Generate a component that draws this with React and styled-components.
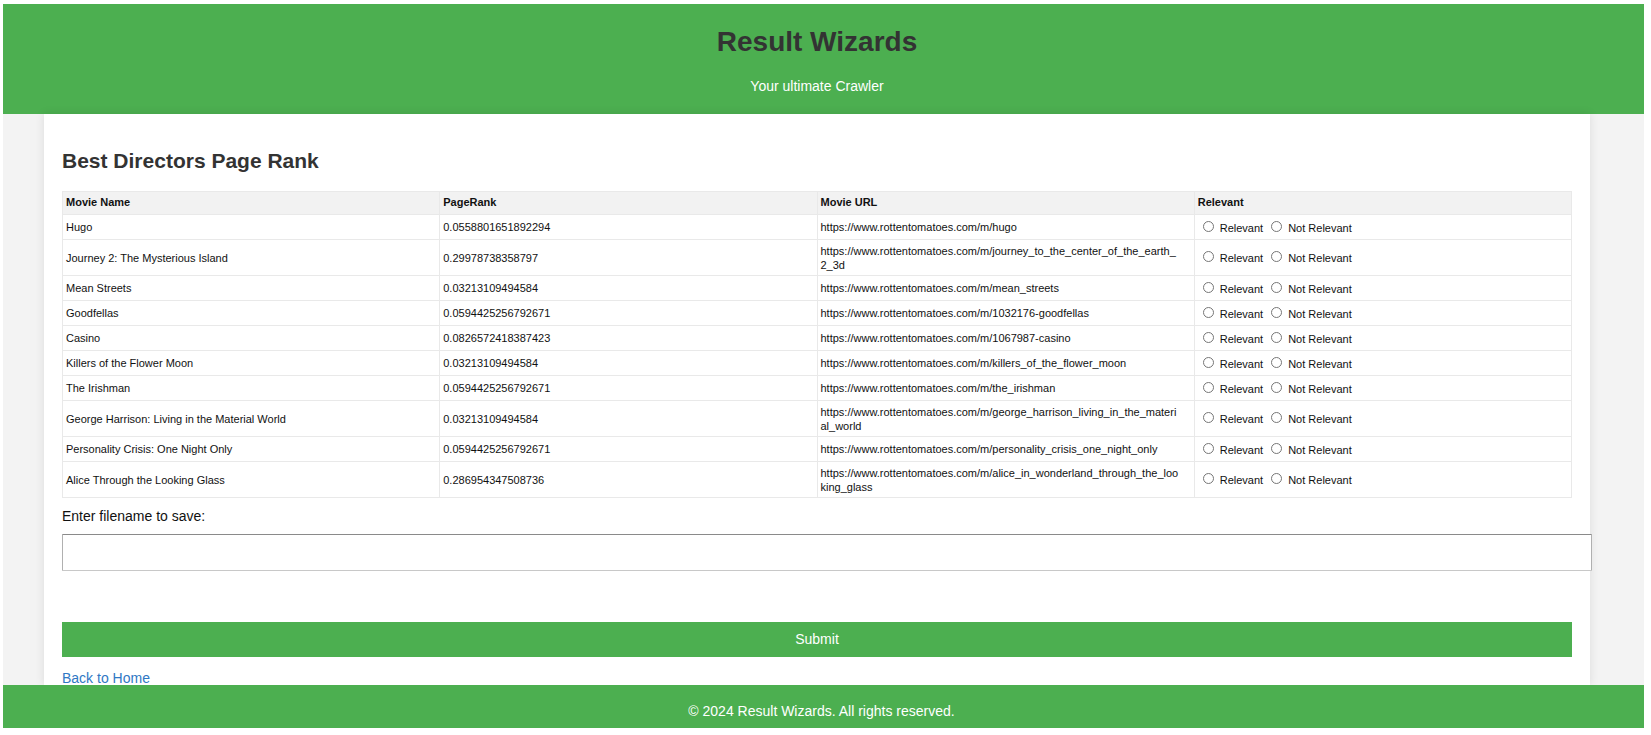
import React from "react";
import styled, { createGlobalStyle } from "styled-components";

const GlobalStyle = createGlobalStyle`
  body {
    margin: 0;
    background: #fff;
    color: #111;
    font-family: "Liberation Sans", Arial, sans-serif;
    font-size: 14px;
    line-height: 16px;
  }
`;

const Page = styled.div`
  box-sizing: border-box;
  min-height: 100vh;
  padding: 4px 7px 7px 3px;
  display: flex;
  flex-direction: column;
`;

const Header = styled.header`
  padding: 21px 13px 20px 0;
  background: #4caf50;
  color: #fff;
  text-align: center;
`;

const Title = styled.h1`
  margin: 0 0 19px;
  font-size: 28px;
  line-height: 34px;
  color: #333;
`;

const Tagline = styled.p`
  margin: 0;
`;

const Body = styled.div`
  flex: 1;
  display: flex;
  flex-direction: column;
  padding: 0 54px 0 41px;
  background: #f3f3f3;
`;

const Sheet = styled.main`
  flex: 1;
  padding: 35px 18px 0;
  background: #fff;
  box-shadow: 0 0 9px rgba(0, 0, 0, 0.1);
`;

const Heading = styled.h2`
  margin: 0 0 18px;
  font-size: 21px;
  line-height: 24px;
  color: #333;
`;

const Table = styled.table`
  width: 100%;
  table-layout: fixed;
  border-collapse: collapse;
  font-size: 11px;
  line-height: 14px;
`;

const HeadCell = styled.th`
  height: 20px;
  padding: 0 3px 2px;
  border: 1px solid #e9e9e9;
  background: #f2f2f2;
  text-align: left;
`;

const Cell = styled.td`
  height: 24px;
  padding: 0 3px;
  border: 1px solid #e9e9e9;
  overflow-wrap: anywhere;
`;

const Row = styled.tr`
  ${Cell} {
    height: ${(p) => (p.$tall ? 35 : 24)}px;
  }
`;

const Choices = styled.div`
  display: flex;
  gap: 8px;
  padding-left: 5px;
`;

const Choice = styled.label`
  display: flex;
  align-items: flex-start;
  gap: 6px;
  padding-top: 1px;
`;

const Radio = styled.input`
  appearance: none;
  box-sizing: border-box;
  width: 11px;
  height: 11px;
  margin: 0;
  border: 1px solid #767676;
  border-radius: 50%;
  background: #fff;
  &:checked {
    border: 3px solid #1a73e8;
  }
`;

const FileLabel = styled.label`
  display: block;
  margin: 10px 0;
`;

const FileInput = styled.input`
  display: block;
  box-sizing: content-box;
  width: 100%;
  height: 17px;
  margin: 0 0 51px;
  padding: 9px;
  border: 1px solid;
  border-color: #8a8a8a #b0b0b0 #c8c8c8 #b0b0b0;
  border-radius: 1px;
  font: inherit;
`;

const Submit = styled.button`
  display: block;
  width: 100%;
  height: 35px;
  margin: 0 0 14px;
  padding: 0 0 2px;
  border: 0;
  background: #4caf50;
  color: #fff;
  font: inherit;
`;

const HomeLink = styled.a`
  display: block;
  width: fit-content;
  line-height: 14px;
  color: #2f78c4;
  text-decoration: none;
`;

const Footer = styled.footer`
  position: relative;
  padding: 18px 4px 9px 0;
  background: #4caf50;
  color: #fff;
  text-align: center;
`;

const COLUMNS = ["Movie Name", "PageRank", "Movie URL", "Relevant"];
const BASE = "https://www.rottentomatoes.com/m/";

const MOVIES = [
  ["Hugo", "0.0558801651892294", ["hugo"]],
  ["Journey 2: The Mysterious Island", "0.29978738358797", ["journey_to_the_center_of_the_earth_", "2_3d"]],
  ["Mean Streets", "0.03213109494584", ["mean_streets"]],
  ["Goodfellas", "0.0594425256792671", ["1032176-goodfellas"]],
  ["Casino", "0.0826572418387423", ["1067987-casino"]],
  ["Killers of the Flower Moon", "0.03213109494584", ["killers_of_the_flower_moon"]],
  ["The Irishman", "0.0594425256792671", ["the_irishman"]],
  ["George Harrison: Living in the Material World", "0.03213109494584", ["george_harrison_living_in_the_materi", "al_world"]],
  ["Personality Crisis: One Night Only", "0.0594425256792671", ["personality_crisis_one_night_only"]],
  ["Alice Through the Looking Glass", "0.286954347508736", ["alice_in_wonderland_through_the_loo", "king_glass"]],
];

function MovieRow({ index, name, rank, slug }) {
  return (
    <Row $tall={slug.length > 1}>
      <Cell>{name}</Cell>
      <Cell>{rank}</Cell>
      <Cell>
        {BASE + slug[0]}
        {slug[1] && <br />}
        {slug[1]}
      </Cell>
      <Cell>
        <Choices>
          {["Relevant", "Not Relevant"].map((text) => (
            <Choice key={text}>
              <Radio type="radio" name={`movie-${index}`} value={text} />
              {text}
            </Choice>
          ))}
        </Choices>
      </Cell>
    </Row>
  );
}

export default function App() {
  return (
    <>
      <GlobalStyle />
      <Page>
        <Header>
          <Title>Result Wizards</Title>
          <Tagline>Your ultimate Crawler</Tagline>
        </Header>
        <Body>
          <Sheet>
            <Heading>Best Directors Page Rank</Heading>
            <form onSubmit={(e) => e.preventDefault()}>
              <Table>
                <thead>
                  <tr>
                    {COLUMNS.map((c) => (
                      <HeadCell key={c} scope="col">{c}</HeadCell>
                    ))}
                  </tr>
                </thead>
                <tbody>
                  {MOVIES.map(([name, rank, slug], i) => (
                    <MovieRow key={name} index={i} name={name} rank={rank} slug={slug} />
                  ))}
                </tbody>
              </Table>
              <FileLabel htmlFor="filename">Enter filename to save:</FileLabel>
              <FileInput id="filename" type="text" />
              <Submit type="submit">Submit</Submit>
            </form>
            <HomeLink href="#home">Back to Home</HomeLink>
          </Sheet>
        </Body>
        <Footer>© 2024 Result Wizards. All rights reserved.</Footer>
      </Page>
    </>
  );
}
